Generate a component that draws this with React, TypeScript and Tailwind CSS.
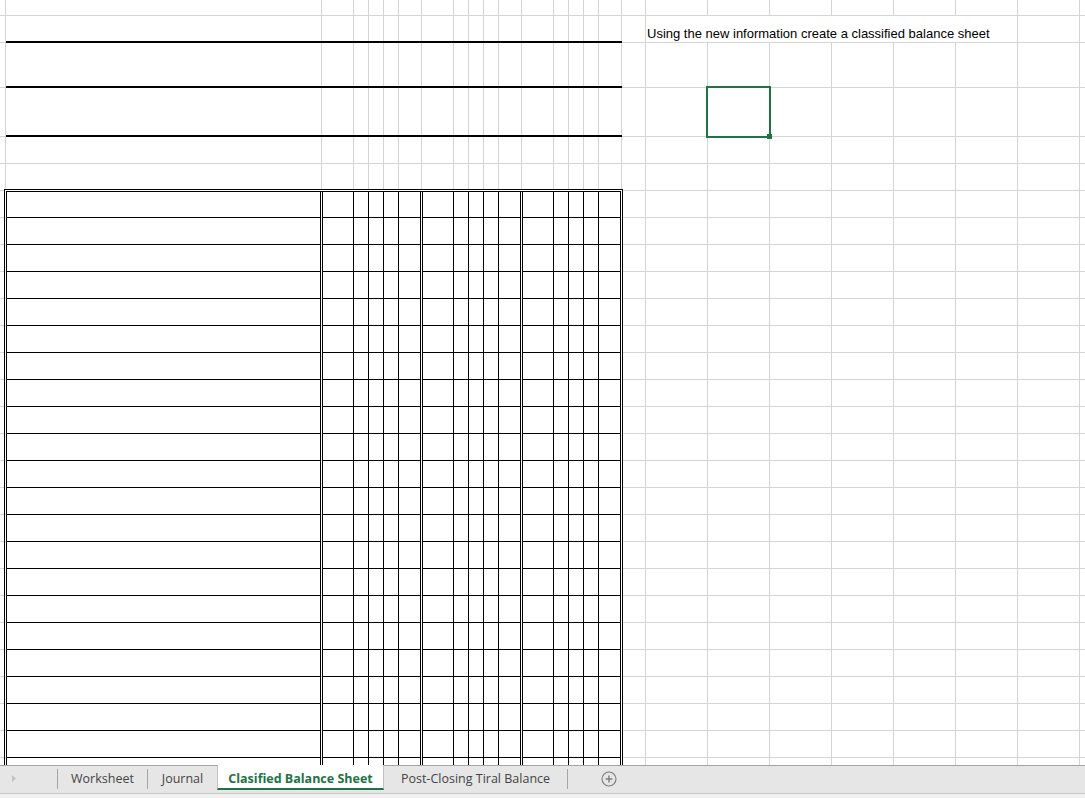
import React from "react";

const TOP_ROW_COUNT = 6;
const COLS = 26;
const LOWER_ROWS = 22;

function Selection() {
  return (
    <div className="absolute -inset-[2px] z-20 border-2 border-[#217346]">
      <div className="absolute -right-[3px] -bottom-[3px] w-[5px] h-[5px] bg-[#217346]" />
    </div>
  );
}

function TopGrid() {
  const cells: React.ReactNode[] = [];
  for (let r = 0; r < TOP_ROW_COUNT; r++) {
    for (let c = 0; c < COLS; c++) {
      const key = `${r}-${c}`;
      if (r === 1 && c === 18) {
        cells.push(
          <div
            key={key}
            className="col-span-6 border-r border-b border-[#d4d4d4] flex items-end pl-[1px] pb-[1px] whitespace-nowrap text-[13px] leading-[15px] text-black font-['Liberation_Sans',Arial,sans-serif]"
          >
            Using the new information create a classified balance sheet
          </div>
        );
        c += 5;
        continue;
      }
      const thick = r >= 1 && r <= 3 && c >= 1 && c <= 16;
      const sel = r === 3 && c === 19;
      cells.push(
        <div
          key={key}
          className={
            thick
              ? "border-b-2 border-b-black shadow-[inset_-1px_0_0_#d4d4d4]"
              : sel
              ? "relative border-r border-b border-[#d4d4d4]"
              : "border-r border-b border-[#d4d4d4]"
          }
        >
          {sel && <Selection />}
        </div>
      );
    }
  }
  return (
    <div className="grid w-[1142px] grid-cols-[6px_316px_32px_15px_15px_15px_23px_32px_15px_15px_15px_23px_32px_15px_15px_15px_23px_24px_62px_62px_62px_62px_62px_62px_62px_62px] grid-rows-[16px_27px_45px_49px_27px_27px]">
      {cells}
    </div>
  );
}

function AmountGroup() {
  return (
    <div className="w-[100px] shrink-0 border-l-[3px] border-double border-black flex flex-col">
      {Array.from({ length: LOWER_ROWS }).map((_, i) => (
        <div
          key={i}
          className={
            (i === 0 ? "h-[26px]" : "h-[27px]") +
            " shrink-0 flex border-b border-black"
          }
        >
          <div className="w-[31px] shrink-0 border-r border-black" />
          <div className="w-[15px] shrink-0 border-r border-black" />
          <div className="w-[15px] shrink-0 border-r border-black" />
          <div className="w-[15px] shrink-0 border-r border-black" />
          <div className="flex-1" />
        </div>
      ))}
    </div>
  );
}

function BalanceForm() {
  return (
    <div className="relative z-10 w-[619px] shrink-0 self-start -ml-[2px] -mr-[1px] -mt-[2px] border-[3px] border-double border-black bg-white flex">
      <div className="w-[313px] shrink-0 flex flex-col">
        {Array.from({ length: LOWER_ROWS }).map((_, i) => (
          <div
            key={i}
            className={
              (i === 0 ? "h-[26px]" : "h-[27px]") +
              " shrink-0 border-b border-black"
            }
          />
        ))}
      </div>
      <AmountGroup />
      <AmountGroup />
      <AmountGroup />
    </div>
  );
}

function LowerSection() {
  return (
    <div className="flex w-[1142px]">
      <div className="w-[6px] shrink-0 flex flex-col">
        {Array.from({ length: LOWER_ROWS }).map((_, i) => (
          <div key={i} className="h-[27px] shrink-0 border-r border-b border-[#d4d4d4]" />
        ))}
      </div>
      <BalanceForm />
      <div className="grid shrink-0 grid-cols-[24px_62px_62px_62px_62px_62px_62px_62px_62px] auto-rows-[27px]">
        {Array.from({ length: LOWER_ROWS * 9 }).map((_, i) => (
          <div key={i} className="border-r border-b border-[#d4d4d4]" />
        ))}
      </div>
    </div>
  );
}

function Separator() {
  return <div className="w-px h-[20px] mt-[3px] self-start shrink-0 bg-[#a6a6a6]" />;
}

function TabBar() {
  return (
    <div className="flex h-[29px] shrink-0 border-t border-b border-t-[#a3a3a3] border-b-[#c6c6c6] bg-[#e6e6e6] font-['Open_Sans',sans-serif] text-[12.5px] leading-[16px] text-[#444444]">
      <div className="w-[57px] shrink-0 flex items-center pl-[12px] pb-[2px]">
        <svg width="4" height="7" viewBox="0 0 4 7">
          <polygon points="0,0 4,3.5 0,7" fill="#c3c3c3" />
        </svg>
      </div>
      <Separator />
      <div className="w-[89px] shrink-0 flex items-center justify-center pb-[2px]">Worksheet</div>
      <Separator />
      <div className="w-[69px] shrink-0 flex items-center justify-center pb-[2px]">Journal</div>
      <div className="w-[167px] h-[25px] -mt-px self-start shrink-0 flex items-center justify-center pt-[5px] bg-white border-x border-x-[#c2c2c2] border-b-2 border-b-[#217346] font-bold text-[#217346]">
        Clasified Balance Sheet
      </div>
      <div className="w-[183px] shrink-0 flex items-center justify-center pb-[2px]">Post-Closing Tiral Balance</div>
      <Separator />
      <div className="ml-[33px] shrink-0 flex items-center pb-[1px]">
        <svg width="16" height="16" viewBox="0 0 16 16">
          <circle cx="8" cy="8" r="7" fill="none" stroke="#7a7a7a" strokeWidth="1.1" />
          <line x1="4.5" y1="8" x2="11.5" y2="8" stroke="#7a7a7a" strokeWidth="1.4" />
          <line x1="8" y1="4.5" x2="8" y2="11.5" stroke="#7a7a7a" strokeWidth="1.4" />
        </svg>
      </div>
    </div>
  );
}

export default function App() {
  return (
    <div className="w-[1085px] h-[798px] overflow-hidden bg-white flex flex-col">
      <div className="h-[765px] shrink-0 overflow-hidden">
        <TopGrid />
        <LowerSection />
      </div>
      <TabBar />
      <div className="flex-1 bg-[#f1f1f1]" />
    </div>
  );
}
